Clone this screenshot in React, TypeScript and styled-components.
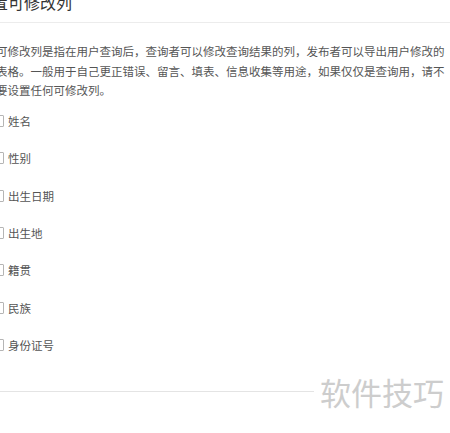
import React from "react";
import styled, { createGlobalStyle } from "styled-components";

const GlobalStyle = createGlobalStyle`
  html, body {
    margin: 0;
    padding: 0;
    background: #ffffff;
    overflow: hidden;
  }
  body {
    font-family: "Noto Sans CJK SC", "Microsoft YaHei", sans-serif;
  }
`;

const Page = styled.div`
  position: relative;
  width: 450px;
  height: 433px;
  overflow: hidden;
  background: #ffffff;
`;

const Panel = styled.div`
  width: 476px;
  margin-left: -24px;
  margin-top: -19px;
  display: flex;
  flex-direction: column;
`;

const Header = styled.div`
  box-sizing: border-box;
  height: 42px;
  display: flex;
  align-items: center;
  border-bottom: 1px solid #ececec;
`;

const Title = styled.h3`
  margin: 0;
  font-size: 16px;
  line-height: 16px;
  font-weight: 400;
  color: #333333;
`;

const Body = styled.div`
  padding-top: 19px;
  display: flex;
  flex-direction: column;
`;

const Intro = styled.p`
  margin: 0;
  padding-left: 20px;
  font-size: 11.5px;
  line-height: 19.5px;
  color: #555555;
`;

const OptionList = styled.ul`
  list-style: none;
  margin: 2px 0 0;
  padding: 0 0 0 16px;
`;

const OptionRow = styled.li`
  height: 37.3px;
  display: flex;
  align-items: center;
  gap: 4px;
  font-size: 11.5px;
  color: #555555;
`;

const Box = styled.span`
  box-sizing: border-box;
  width: 12px;
  height: 12px;
  border: 1px solid #b5b5b5;
  border-radius: 1px;
  background: #ffffff;
`;

const Footer = styled.div`
  margin-top: 27px;
  height: 44px;
  border-top: 1px solid #e4e4e4;
  box-shadow: 0 1px 1px rgba(0, 0, 0, 0.03);
  background: #ffffff;
`;

const Watermark = styled.div`
  position: absolute;
  left: 314px;
  top: 372px;
  padding: 0 6px;
  background: #ffffff;
  white-space: nowrap;
  font-size: 31px;
  line-height: 40px;
  color: #cdcdcd;
  font-family: "Noto Sans CJK SC", sans-serif;
`;

const fields = ["姓名", "性别", "出生日期", "出生地", "籍贯", "民族", "身份证号"];

export default function App() {
  return (
    <Page>
      <GlobalStyle />
      <Panel>
        <Header>
          <Title>设置可修改列</Title>
        </Header>
        <Body>
          <Intro>
            可修改列是指在用户查询后，查询者可以修改查询结果的列，发布者可以导出用户修改的表格。一般用于自己更正错误、留言、填表、信息收集等用途，如果仅仅是查询用，请不要设置任何可修改列。
          </Intro>
          <OptionList>
            {fields.map((f) => (
              <OptionRow key={f}>
                <Box />
                {f}
              </OptionRow>
            ))}
          </OptionList>
        </Body>
        <Footer />
      </Panel>
      <Watermark>软件技巧</Watermark>
    </Page>
  );
}
